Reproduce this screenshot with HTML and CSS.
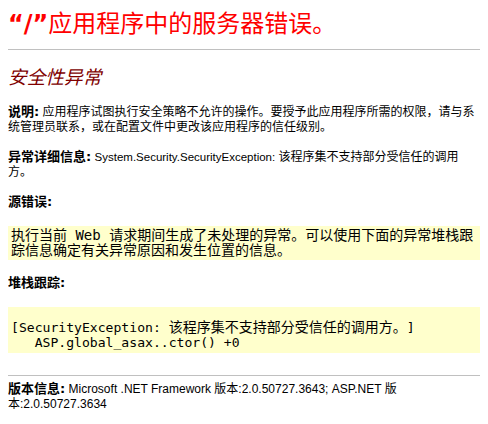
FILE: index.html
```html
<!DOCTYPE html>
<html lang="zh-CN">
<head>
<meta charset="utf-8">
<title>“/”应用程序中的服务器错误。</title>
<link rel="stylesheet" href="styles.css">
</head>
<body>
<h1 class="title"><span class="app">“/”</span>应用程序中的服务器错误。</h1>
<hr class="rule">
<h2 class="subtitle">安全性异常</h2>
<p class="para"><b class="label">说明:</b> 应用程序试图执行安全策略不允许的操作。要授予此应用程序所需的权限，请与系统管理员联系，或在配置文件中更改该应用程序的信任级别。</p>
<p class="para"><b class="label">异常详细信息:</b> <span class="en">System.Security.SecurityException:</span> 该程序集不支持部分受信任的调用方。</p>
<p class="para"><b class="label">源错误:</b></p>
<div class="box box-source"><code class="code">执行当前 Web 请求期间生成了未处理的异常。可以使用下面的异常堆栈跟踪信息确定有关异常原因和发生位置的信息。</code></div>
<p class="para para-stack"><b class="label">堆栈跟踪:</b></p>
<div class="box box-stack"><pre class="trace">[SecurityException: <span class="zh">该程序集不支持部分受信任的调用方。</span>]
   ASP.global_asax..ctor() +0</pre></div>
<hr class="rule rule-bottom">
<p class="para version"><b class="label">版本信息:</b> Microsoft .NET Framework 版本:2.0.50727.3643; ASP.NET 版本:2.0.50727.3634</p>
</body>
</html>
```

FILE: styles.css
```css
html {
  background: #ffffff;
}

body {
  margin: 8px;
  font-family: "Liberation Sans", "Noto Sans CJK SC", sans-serif;
  font-size: 12px;
  line-height: 15px;
  color: #000000;
  text-spacing-trim: space-all;
}

.title {
  margin: 2px 0 0;
  font-family: "DejaVu Sans", "Noto Sans CJK SC", sans-serif;
  font-weight: normal;
  font-size: 24px;
  line-height: 28px;
  color: #ff0000;
}

.app {
  font-weight: bold;
}

.rule {
  border: 0;
  border-top: 1px solid #c0c0c0;
  height: 0;
  margin: 11px 0 0;
}

.subtitle {
  margin: 16px 0 0;
  font-family: "DejaVu Sans", "Noto Sans CJK SC", sans-serif;
  font-weight: normal;
  font-style: italic;
  font-size: 18.67px;
  line-height: 24px;
  color: #800000;
}

.para {
  margin: 15px 0 0;
}

.para-stack {
  margin-top: 16px;
}

.label {
  font-family: "DejaVu Sans", "Noto Sans CJK SC", sans-serif;
  font-size: 13px;
  font-weight: bold;
  line-height: 12px;
}

.en {
  font-size: 11.5px;
  line-height: 12px;
}

.box {
  background: #ffffcc;
  margin-top: 16px;
  font-family: "DejaVu Sans Mono", "Noto Sans CJK SC", monospace;
  line-height: 15px;
}

.box-source {
  padding: 2px 3px;
  font-size: 14px;
}

.code {
  font: inherit;
}

.box-stack {
  padding: 13px 3px 3px;
  font-size: 13.1px;
}

.trace {
  margin: 0;
  font: inherit;
}

.zh {
  font-size: 14px;
  line-height: 12px;
}

.rule-bottom {
  margin-top: 22px;
}

.version {
  margin-top: 6px;
}
```
